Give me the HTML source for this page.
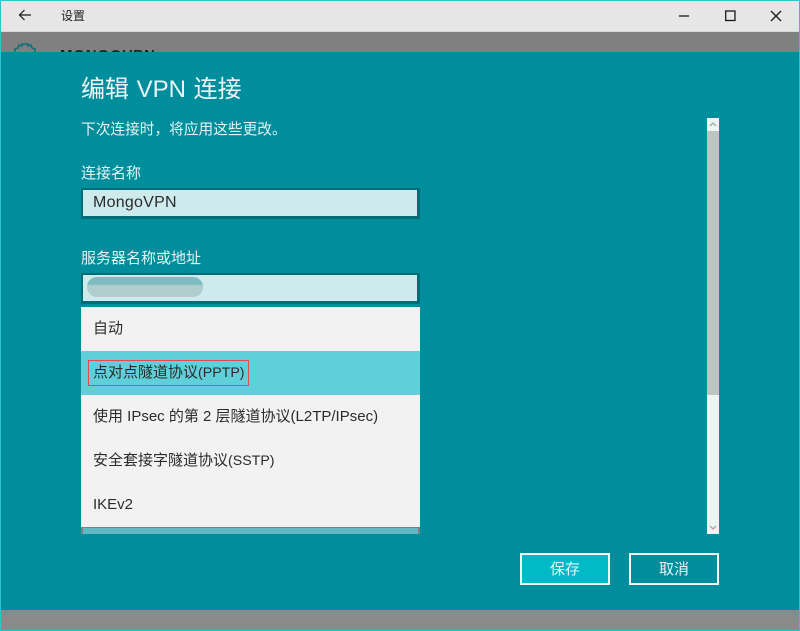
<!DOCTYPE html>
<html lang="zh">
<head>
<meta charset="utf-8">
<style>
html,body{margin:0;padding:0;width:800px;height:631px;overflow:hidden;background:#808080}
body{position:relative;font-family:"Liberation Sans","Noto Sans CJK SC",sans-serif}
.a{position:absolute;white-space:nowrap}
.w{color:#e4f4f5;font-size:15px;line-height:20px}
.d{color:#2b2b2b}
.input{left:81px;width:339px;height:31px;box-sizing:border-box;background:#cdeaec;border:2px solid #006c78;border-width:2px 3px 3px 2px}
.item{left:81px;width:339px;height:44px;line-height:44px;font-size:15px;color:#2b2b2b;text-indent:12px}
.item span{font-size:14.2px}
.item span.b{font-size:15px}
</style>
</head>
<body>
<!-- window frame -->
<div class="a" style="left:0;top:0;width:800px;height:1px;background:#2dc3d0"></div>
<div class="a" style="left:0;top:1px;width:800px;height:31px;background:#e6e6e6"></div>
<div class="a" style="left:0;top:31px;width:800px;height:1px;background:#d8d8d8"></div>
<div class="a" style="left:0;top:32px;width:800px;height:20px;background:#808080"></div>
<!-- title bar -->
<svg class="a" style="left:17px;top:7px" width="16" height="16" viewBox="0 0 16 16" fill="none" stroke="#1a1a1a" stroke-width="1.2"><path d="M2.500 8H14M7.500 3L2.500 8L7.500 13"/></svg>
<div class="a" style="left:61px;top:8px;font-size:12px;line-height:16px;color:#222">设置</div>
<svg class="a" style="left:676px;top:8px" width="112" height="16" viewBox="0 0 112 16" fill="none" stroke="#1a1a1a" stroke-width="1.300"><path d="M3 8H13"/><rect x="49.700" y="3" width="9.300" height="9.500"/><path d="M95 3L105 13M105 3L95 13"/></svg>
<!-- hidden behind -->
<svg class="a" style="left:14px;top:43px" width="22" height="9" viewBox="0 0 22 9" fill="none" stroke="#0b6f78" stroke-width="1.500"><path d="M1 9V6L4 5L5 2L8 3V1H14V3L17 2L18 5L21 6V9"/></svg>
<div class="a" style="left:60px;top:47px;height:5px;overflow:hidden;font-size:15px;line-height:17px;font-weight:bold;color:#222;letter-spacing:.8px">MONGOVPN</div>
<!-- panel -->
<div class="a" style="left:0;top:52px;width:800px;height:558px;background:#008e9c"></div>
<div class="a" style="left:0;top:610px;width:800px;height:20px;background:#8a8a8a"></div>
<div class="a" style="left:0;top:630px;width:800px;height:1px;background:#2dc3d0"></div>
<div class="a" style="left:0;top:0;width:1px;height:631px;background:#2dc3d0"></div>
<div class="a" style="left:799px;top:0;width:1px;height:631px;background:#2dc3d0"></div>

<div class="a" style="left:81px;top:74px;font-size:24px;line-height:32px;color:#eaf6f7;word-spacing:1px">编辑 VPN 连接</div>
<div class="a w" style="left:81px;top:120px;font-size:14.7px">下次连接时，将应用这些更改。</div>
<div class="a w" style="left:81px;top:164px">连接名称</div>
<div class="a input" style="top:188px"></div>
<div class="a d" style="left:93px;top:193px;font-size:16px;line-height:20px;letter-spacing:.25px">MongoVPN</div>
<div class="a w" style="left:81px;top:249px">服务器名称或地址</div>
<div class="a input" style="top:273px"></div>
<div class="a" style="left:87px;top:277px;width:116px;height:20px;border-radius:10px;background:linear-gradient(#7fbcc2 0,#7fbcc2 38%,#afcdcf 42%,#b2cdce 100%)"></div>

<!-- dropdown -->
<div class="a" style="left:81px;top:527px;width:339px;height:7px;background:#808080"></div>
<div class="a" style="left:83px;top:528px;width:335px;height:6px;background:#62b8c2"></div>
<div class="a" style="left:81px;top:307px;width:339px;height:220px;background:#f2f2f2"></div>
<div class="a item" style="top:307px">自动</div>
<div class="a item" style="top:351px;background:#5fd0da">点对点隧道协议<span>(PPTP)</span></div>
<div class="a item" style="top:395px">使用 <span class="b">IPsec</span> 的第 2 层隧道协议<span class="b">(L2TP/IPsec)</span></div>
<div class="a item" style="top:439px">安全套接字隧道协议<span>(SSTP)</span></div>
<div class="a item" style="top:483px"><span class="b">IKEv2</span></div>
<div class="a" style="left:88px;top:360px;width:159px;height:24px;border:1px solid #e8484a"></div>

<!-- scrollbar -->
<div class="a" style="left:707px;top:118px;width:12px;height:416px;background:#f2f2f2"></div>
<div class="a" style="left:707px;top:131px;width:12px;height:264px;background:#c2c2c2"></div>
<svg class="a" style="left:707px;top:118px" width="12" height="13" viewBox="0 0 12 13" fill="none" stroke="#a6a6a6" stroke-width="1.300"><path d="M3 8L6 5L9 8"/></svg>
<svg class="a" style="left:707px;top:521px" width="12" height="13" viewBox="0 0 12 13" fill="none" stroke="#a6a6a6" stroke-width="1.300"><path d="M3 5L6 8L9 5"/></svg>

<!-- buttons -->
<div class="a" style="left:520px;top:553px;width:90px;height:32px;box-sizing:border-box;border:2px solid #f2fafa;background:#00bac8;color:#e4f6f7;font-size:15px;line-height:30px;text-align:center">保存</div>
<div class="a" style="left:629px;top:553px;width:90px;height:32px;box-sizing:border-box;border:2px solid #f2fafa;background:#008e9c;color:#e4f6f7;font-size:15px;line-height:30px;text-align:center">取消</div>
</body>
</html>
